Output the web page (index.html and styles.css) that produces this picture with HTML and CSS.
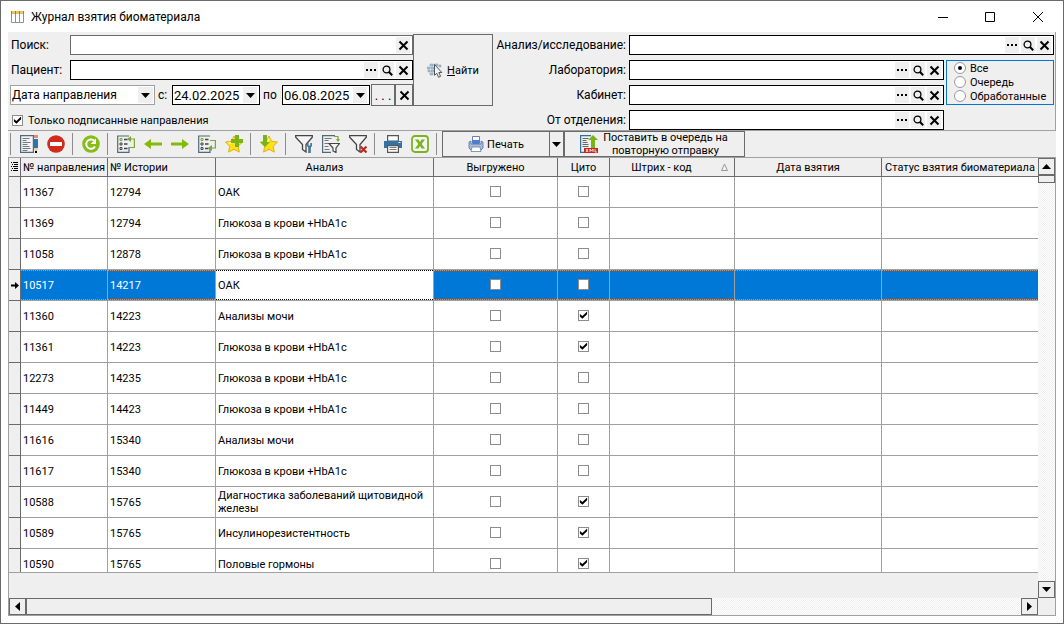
FILE: index.html
```
<!DOCTYPE html>
<html lang="ru">
<head>
  <meta charset="UTF-8" />
  <meta name="viewport" content="width=device-width, initial-scale=1.0" />
  <title>Журнал взятия биоматериала</title>
  <link rel="stylesheet" href="styles.css">
</head>
<body>

<!-- Общие иконки -->
<svg class="sprite" aria-hidden="true">
  <symbol id="i-x" viewBox="0 0 11 11"><path d="M1.5 1.5l8 8M9.5 1.5l-8 8" stroke="#000" stroke-width="2" fill="none"/></symbol>
  <symbol id="i-dots" viewBox="0 0 11 11"><path d="M0 4h2v2H0zM4 4h2v2H4zM8 4h2v2H8z" fill="#000"/></symbol>
  <symbol id="i-search" viewBox="0 0 11 11"><circle cx="4.5" cy="4.5" r="3.4" fill="none" stroke="#000" stroke-width="1.3"/><path d="M7 7l3.2 3.2" stroke="#000" stroke-width="2"/></symbol>
  <symbol id="i-down" viewBox="0 0 9 5"><path d="M0 0h9L4.5 5z" fill="#000"/></symbol>
  <symbol id="i-funnel" viewBox="0 0 18 18"><path d="M.7.7h16.6v1.6L11 9.5V17l-3.5-2.5v-5L.7 2.3z" fill="#f4f4f4" stroke="#444" stroke-width="1.3"/></symbol>
  <symbol id="i-list" viewBox="0 0 18 18"><path d="M12 1H.7v16.3H12V12" fill="none" stroke="#4d6a7c" stroke-width="1.2"/><path d="M3 3.500h2v2H3z" fill="none" stroke="#7aa63a"/><path d="M3 8h2v2H3zM3 12.500h2v2H3z" fill="none" stroke="#444"/><path d="M7 4.500h3.500M7 9h3.500M7 13.500h3.500" stroke="#444" stroke-width="1.300"/></symbol>
  <symbol id="i-star" viewBox="0 0 18 18"><path d="M9 1l2.500 5.300 6 .7-4.300 4.200 1.100 5.900L9 14.300l-5.400 2.800 1.100-5.900L.5 7l6-.7z" fill="#ffe119" stroke="#e0b010" stroke-width="1"/><path d="M9 3.500l-1.500 4-4 .5" stroke="#fff8a8" stroke-width="1.500" fill="none"/></symbol>
</svg>

<div class="window">
  <header class="titlebar">
    <svg class="app-icon" viewBox="0 0 13 12"><path d="M.5.5h12v11H.5z" fill="#fff" stroke="#7c96aa"/><path d="M4.500 0v12M8.500 0v12" stroke="#7c96aa"/><path d="M0 0h13v3H0z" fill="#5f88a8"/><path d="M1 0h3v3H1zM5 0h3v3H5zM9 0h3v3H9z" fill="#e8c460"/></svg>
    <h1>Журнал взятия биоматериала</h1>
    <div class="window-buttons">
      <button aria-label="Свернуть"><svg viewBox="0 0 10 10"><path d="M0 5.500h10" stroke="#000"/></svg></button>
      <button aria-label="Развернуть"><svg viewBox="0 0 10 10"><path d="M.5.5h9v9h-9z" fill="none" stroke="#000"/></svg></button>
      <button aria-label="Закрыть"><svg viewBox="0 0 10 10"><path d="M0 0l10 10M10 0L0 10" stroke="#000"/></svg></button>
    </div>
  </header>

  <form class="filters">
    <div class="filters-left">
      <div class="row">
        <label for="search">Поиск:</label>
        <div class="combo gray"><input id="search" type="text"><button type="button" aria-label="Очистить"><svg><use href="#i-x"/></svg></button></div>
      </div>
      <div class="row">
        <label for="patient">Пациент:</label>
        <div class="combo"><input id="patient" type="text"><button type="button" aria-label="Выбрать"><svg><use href="#i-dots"/></svg></button><button type="button" aria-label="Найти"><svg><use href="#i-search"/></svg></button><button type="button" aria-label="Очистить"><svg><use href="#i-x"/></svg></button></div>
      </div>
      <div class="row dates">
        <div class="date-kind">
          <select aria-label="Вид даты"><option>Дата направления</option></select>
          <svg class="caret"><use href="#i-down"/></svg>
        </div>
        <label for="from">с:</label>
        <div class="combo date"><input id="from" type="text" value="24.02.2025"><button type="button" aria-label="Календарь"><svg class="caret"><use href="#i-down"/></svg></button></div>
        <label for="to">по</label>
        <div class="combo date"><input id="to" type="text" value="06.08.2025"><button type="button" aria-label="Календарь"><svg class="caret"><use href="#i-down"/></svg></button></div>
        <button type="button" class="flat period">. . .</button>
        <button type="button" class="flat clear" aria-label="Очистить даты"><svg><use href="#i-x"/></svg></button>
      </div>
      <div class="row">
        <label class="signed"><input type="checkbox" checked> Только подписанные направления</label>
      </div>
    </div>

    <button type="button" class="flat find">
      <svg viewBox="0 0 16 16"><path d="M3 2h3v2H3zM7 2h4v2H7zM0 5h3v2H0zM4 5h3v2H4zM1 8h2v2H1zM4 8h3v2H4zM3 11h3v2H3zM12 3h2v2h-2z" fill="#a9c6d6" stroke="#6f98ae" stroke-width=".5"/><path d="M7.500 2.500v10.800l2.300-2 1.800 4 2-1-1.800-3.800h3z" fill="#f4f4f4" stroke="#555"/></svg>
      <span><u>Н</u>айти</span>
    </button>

    <div class="filters-right">
      <label for="analysis">Анализ/исследование:</label>
      <div class="combo wide"><input id="analysis" type="text"><button type="button" aria-label="Выбрать"><svg><use href="#i-dots"/></svg></button><button type="button" aria-label="Найти"><svg><use href="#i-search"/></svg></button><button type="button" aria-label="Очистить"><svg><use href="#i-x"/></svg></button></div>
      <label for="lab">Лаборатория:</label>
      <div class="combo"><input id="lab" type="text"><button type="button" aria-label="Выбрать"><svg><use href="#i-dots"/></svg></button><button type="button" aria-label="Найти"><svg><use href="#i-search"/></svg></button><button type="button" aria-label="Очистить"><svg><use href="#i-x"/></svg></button></div>
      <div class="status" role="radiogroup" aria-label="Статус">
        <label><input type="radio" name="status" checked> Все</label>
        <label><input type="radio" name="status"> Очередь</label>
        <label><input type="radio" name="status"> Обработанные</label>
      </div>
      <label for="room">Кабинет:</label>
      <div class="combo"><input id="room" type="text"><button type="button" aria-label="Выбрать"><svg><use href="#i-dots"/></svg></button><button type="button" aria-label="Найти"><svg><use href="#i-search"/></svg></button><button type="button" aria-label="Очистить"><svg><use href="#i-x"/></svg></button></div>
      <label for="dept">От отделения:</label>
      <div class="combo"><input id="dept" type="text"><button type="button" aria-label="Выбрать"><svg><use href="#i-dots"/></svg></button><button type="button" aria-label="Найти"><svg><use href="#i-search"/></svg></button><button type="button" aria-label="Очистить"><svg><use href="#i-x"/></svg></button></div>
    </div>
  </form>

  <div class="toolbar">
    <i class="sep"></i>
    <button class="tool" aria-label="Изменить"><svg viewBox="0 0 18 18"><path d="M.6.6h12.800v16.800H.6z" fill="#f4f4f4" stroke="#4d6a7c" stroke-width="1.200"/><path d="M2.500 3.500h7M2.500 5.500h4M2.500 7.500h8M2.500 9.500h5M2.500 11.500h7M2.500 13.500h8M2.500 15.500h5" stroke="#777"/><path d="M14 0h4v3h-4z" fill="#e58a7c"/><path d="M14 4h4v9h-4z" fill="#2f73a8"/><path d="M14 13h4l-1 3h-2z" fill="#e8cfa0"/><path d="M15 16h2v2h-2z" fill="#000"/></svg></button>
    <button class="tool" aria-label="Удалить"><svg viewBox="0 0 18 18"><circle cx="9" cy="9" r="8.800" fill="#cf2c1c"/><path d="M3 7h12v4H3z" fill="#fff"/></svg></button>
    <i class="sep"></i>
    <button class="tool" aria-label="Обновить"><svg viewBox="0 0 18 18"><circle cx="9" cy="9" r="8.800" fill="#86bc17"/><path d="M13 11.500A4.700 4.700 0 1 1 12 5.500" fill="none" stroke="#fff" stroke-width="2"/><path d="M14 3.500V9H8.700z" fill="#fff"/></svg></button>
    <i class="sep"></i>
    <button class="tool" aria-label="Первая запись"><svg viewBox="0 0 18 18"><use href="#i-list"/><path d="M12 12.500h5.400V4H13" fill="none" stroke="#7aa63a" stroke-width="1.200"/><path d="M10 4l4-3v6z" fill="#7aa63a"/></svg></button>
    <button class="tool" aria-label="Назад"><svg viewBox="0 0 18 18"><path d="M0 9l7-5v3.500h11v3H7V14z" fill="#84bb08"/></svg></button>
    <button class="tool" aria-label="Вперёд"><svg viewBox="0 0 18 18"><path d="M18 9l-7-5v3.500H0v3h11V14z" fill="#84bb08"/></svg></button>
    <button class="tool" aria-label="Последняя запись"><svg viewBox="0 0 18 18"><use href="#i-list"/><path d="M12 5.500h5.400V13H13" fill="none" stroke="#7aa63a" stroke-width="1.200"/><path d="M10 13l4-3v6z" fill="#7aa63a"/></svg></button>
    <button class="tool" aria-label="Добавить в избранное"><svg viewBox="0 0 18 18"><use href="#i-star"/><path d="M10 0h4v4h4v4h-4v4h-4V8H6V4h4z" fill="#7ab317"/></svg></button>
    <i class="sep"></i>
    <button class="tool" aria-label="Избранное"><svg viewBox="0 0 18 18"><use href="#i-star"/><path d="M3 0h4v7h3l-5 5-5-5h3z" fill="#7ab317"/></svg></button>
    <i class="sep"></i>
    <button class="tool" aria-label="Настроить фильтр"><svg viewBox="0 0 18 18"><use href="#i-funnel"/><path d="M12 8h1.500v2.500h1.800V8H17v3l-1.200 1.500V18h-2.600v-5.500L12 11z" fill="#41799f"/></svg></button>
    <button class="tool" aria-label="Фильтр по значению"><svg viewBox="0 0 18 18"><path d="M13 .6H.6v16.800H9" fill="none" stroke="#4d6a7c" stroke-width="1.200"/><path d="M2.500 3.500h7M2.500 5.500h4M2.500 8.500h4M2.500 11.500h4M2.500 14.500h5" stroke="#777"/><path d="M12 1.500h4V6" fill="none" stroke="#7aa63a" stroke-width="1.200"/><path d="M14 4h4l-2 3z" fill="#7aa63a"/><path d="M7 8.500h10.500L14 13v4.500L11 16v-3z" fill="#f4f4f4" stroke="#444" stroke-width="1.200"/></svg></button>
    <button class="tool" aria-label="Снять фильтр"><svg viewBox="0 0 18 18"><use href="#i-funnel"/><path d="M11.500 11.500l6 6M17.500 11.500l-6 6" stroke="#c0281e" stroke-width="2.200"/></svg></button>
    <i class="sep"></i>
    <button class="tool" aria-label="Распечатать"><svg viewBox="0 0 18 18"><path d="M3.600.6h10.800V6H3.600z" fill="#fff" stroke="#555" stroke-width="1.200"/><path d="M0 6h18v7H0z" fill="#2f73a8"/><path d="M14.500 7.500h2" stroke="#fff"/><path d="M3.600 10.600h10.800v6.800H3.600z" fill="#fff" stroke="#555" stroke-width="1.200"/><path d="M5.500 12.500h7M5.500 14.500h7" stroke="#777"/></svg></button>
    <button class="tool" aria-label="Экспорт в Excel"><svg viewBox="0 0 18 18"><rect x="1" y="1" width="16" height="16" rx="3" fill="#f4f7ee" stroke="#7db226" stroke-width="1.800"/><path d="M4 4.500h3.500L9 7l1.500-2.500H14L10.700 9l3.300 4.500h-3.500L9 11l-1.500 2.500H4L7.300 9z" fill="#7db226"/></svg></button>
    <i class="sep"></i>
    <button class="flat print"><svg viewBox="0 0 16 16"><path d="M4.500.5h7V7h-7z" fill="#fff" stroke="#6a7fae"/><path d="M1 6l2-1v3h10V5l2 1v6l-2 2H3l-2-2z" fill="#a9b9da" stroke="#5c70a0" stroke-width=".8"/><path d="M4.500 4h7v4h-7z" fill="#4a7fd0"/><path d="M4 11h8l1 4.500H3z" fill="#fff" stroke="#6a7fae" stroke-width=".8"/></svg>Печать</button>
    <button class="flat print-menu" aria-label="Варианты печати"><svg viewBox="0 0 9 5"><use href="#i-down"/></svg></button>
    <button class="flat resend"><svg viewBox="0 0 18 18"><path d="M11 .6H.6v16.800H5" fill="none" stroke="#2f6f9c" stroke-width="1.200"/><path d="M2.500 3.500h6M2.500 5.500h4M2.500 7.500h5M2.500 9.500h6M2.500 11.500h6" stroke="#666"/><path d="M13 0l5 5h-3v8h-4V5H8z" fill="#7ab317"/><path d="M4 13h14v5H4z" fill="#c0281e"/><path d="M6 14l2 3M8 14l-2 3M10 17v-3l1.500 2 1.500-2v3M15 14v3h2" fill="none" stroke="#fff" stroke-width=".8"/></svg><span>Поставить в очередь на повторную отправку</span></button>
  </div>

  <main class="grid">
    <div class="table-view">
      <table>
        <colgroup>
          <col class="c-mark"><col class="c-num"><col class="c-hist"><col class="c-name"><col class="c-sent"><col class="c-cito"><col class="c-code"><col class="c-date"><col>
        </colgroup>
        <thead>
          <tr>
            <th><svg class="menu" viewBox="0 0 8 10"><path d="M0 .5h1M2 .5h5M1 2.500h1M3 2.500h4M0 4.500h1M2 4.500h5M1 6.500h1M3 6.500h4M0 8.500h1M2 8.500h5" stroke="#000"/></svg></th>
            <th class="left">№ направления</th><th class="left">№ Истории</th><th>Анализ</th><th>Выгружено</th><th>Цито</th>
            <th><div class="sorted"><span>Штрих - код</span><svg viewBox="0 0 7 8"><path d="M3.500 1l3 6.500h-6z" fill="none" stroke="#999"/></svg></div></th>
            <th>Дата взятия</th><th>Статус взятия биоматериала</th>
          </tr>
        </thead>
        <tbody>
          <tr><td></td><td>11367</td><td>12794</td><td>ОАК</td><td><input type="checkbox" aria-label="Выгружено"></td><td><input type="checkbox" aria-label="Цито"></td><td></td><td></td><td></td></tr>
          <tr><td></td><td>11369</td><td>12794</td><td>Глюкоза в крови +HbA1c</td><td><input type="checkbox" aria-label="Выгружено"></td><td><input type="checkbox" aria-label="Цито"></td><td></td><td></td><td></td></tr>
          <tr><td></td><td>11058</td><td>12878</td><td>Глюкоза в крови +HbA1c</td><td><input type="checkbox" aria-label="Выгружено"></td><td><input type="checkbox" aria-label="Цито"></td><td></td><td></td><td></td></tr>
          <tr class="selected"><td><svg class="marker" viewBox="0 0 8 7"><path d="M0 2.500h4V0l4 3.500L4 7V4.500H0z"/></svg></td><td>10517</td><td>14217</td><td class="focus">ОАК</td><td><input type="checkbox" aria-label="Выгружено"></td><td><input type="checkbox" aria-label="Цито"></td><td></td><td></td><td></td></tr>
          <tr><td></td><td>11360</td><td>14223</td><td>Анализы мочи</td><td><input type="checkbox" aria-label="Выгружено"></td><td><input type="checkbox" aria-label="Цито" checked></td><td></td><td></td><td></td></tr>
          <tr><td></td><td>11361</td><td>14223</td><td>Глюкоза в крови +HbA1c</td><td><input type="checkbox" aria-label="Выгружено"></td><td><input type="checkbox" aria-label="Цито" checked></td><td></td><td></td><td></td></tr>
          <tr><td></td><td>12273</td><td>14235</td><td>Глюкоза в крови +HbA1c</td><td><input type="checkbox" aria-label="Выгружено"></td><td><input type="checkbox" aria-label="Цито"></td><td></td><td></td><td></td></tr>
          <tr><td></td><td>11449</td><td>14423</td><td>Глюкоза в крови +HbA1c</td><td><input type="checkbox" aria-label="Выгружено"></td><td><input type="checkbox" aria-label="Цито"></td><td></td><td></td><td></td></tr>
          <tr><td></td><td>11616</td><td>15340</td><td>Анализы мочи</td><td><input type="checkbox" aria-label="Выгружено"></td><td><input type="checkbox" aria-label="Цито"></td><td></td><td></td><td></td></tr>
          <tr><td></td><td>11617</td><td>15340</td><td>Глюкоза в крови +HbA1c</td><td><input type="checkbox" aria-label="Выгружено"></td><td><input type="checkbox" aria-label="Цито"></td><td></td><td></td><td></td></tr>
          <tr><td></td><td>10588</td><td>15765</td><td>Диагностика заболеваний щитовидной железы</td><td><input type="checkbox" aria-label="Выгружено"></td><td><input type="checkbox" aria-label="Цито" checked></td><td></td><td></td><td></td></tr>
          <tr><td></td><td>10589</td><td>15765</td><td>Инсулинорезистентность</td><td><input type="checkbox" aria-label="Выгружено"></td><td><input type="checkbox" aria-label="Цито" checked></td><td></td><td></td><td></td></tr>
          <tr><td></td><td>10590</td><td>15765</td><td>Половые гормоны</td><td><input type="checkbox" aria-label="Выгружено"></td><td><input type="checkbox" aria-label="Цито" checked></td><td></td><td></td><td></td></tr>
        </tbody>
      </table>
    </div>
    <div class="vscroll">
      <button class="flat" aria-label="Вверх"><svg viewBox="0 0 9 5"><path d="M0 5h9L4.500 0z"/></svg></button>
      <div class="thumb"></div>
      <button class="flat end" aria-label="Вниз"><svg viewBox="0 0 9 5"><path d="M0 0h9L4.500 5z"/></svg></button>
    </div>
    <div class="hscroll">
      <button class="flat" aria-label="Влево"><svg viewBox="0 0 5 9"><path d="M5 0v9L0 4.500z"/></svg></button>
      <div class="thumb"></div>
      <button class="flat end" aria-label="Вправо"><svg viewBox="0 0 5 9"><path d="M0 0v9l5-4.500z"/></svg></button>
    </div>
  </main>
</div>

</body>
</html>
```
FILE: styles.css
```
* {
  box-sizing: border-box;
}
body {
  margin: 0;
  font-family: Tahoma, Roboto, sans-serif;
  font-size: 11px;
  line-height: 13px;
  color: #000;
}
button, input, select {
  font: inherit;
  color: inherit;
  margin: 0;
  padding: 0;
  border: none;
  border-radius: 0;
  background: none;
}
svg {
  display: block;
  flex: none;
}
.sprite {
  display: none;
}
.window {
  display: flex;
  flex-direction: column;
  height: 100vh;
  padding: 0 7px 7px;
  border: 1px solid #6a6a6a;
  background: #fff;
}

/* Заголовок окна */
.titlebar {
  display: flex;
  align-items: center;
  height: 31px;
  margin-right: -4px;
  padding-left: 3px;
}
.app-icon {
  width: 13px;
  height: 12px;
}
.titlebar h1 {
  flex: 1;
  margin: 0 0 0 7px;
  font-size: 12px;
  font-weight: normal;
  line-height: 16px;
}
.window-buttons {
  display: flex;
}
.window-buttons button {
  display: flex;
  justify-content: center;
  width: 47px;
}
.window-buttons button:last-child {
  padding-left: 2px;
}
.window-buttons svg {
  width: 10px;
  height: 10px;
}

/* Панель фильтров */
.filters {
  display: flex;
  align-items: flex-start;
  height: 98px;
  padding: 2px 1px 0 2px;
  border-right: 1px solid #a0a0a0;
  background: #efefef;
  font-size: 12px;
}
.filters-left {
  display: grid;
  grid-template-rows: repeat(4, 20px);
  gap: 5px;
  width: 403px;
  padding: 1px 1px 0 0;
}
.row {
  display: flex;
  align-items: center;
}
.row > label {
  width: 60px;
  padding-left: 1px;
}
.combo {
  display: flex;
  align-items: center;
  flex: 1;
  gap: 2px;
  height: 20px;
  padding: 0 2px 0 1px;
  border: 1px solid #000;
  background: #fff;
}
.combo.gray {
  border-color: #6a6a6a;
}
.combo input {
  flex: 1;
  min-width: 0;
  height: 18px;
  font-size: 13px;
  outline: none;
}
.combo button {
  display: flex;
  align-items: center;
  justify-content: center;
  width: 14px;
  height: 16px;
  background: #efefef;
}
.combo svg, .clear svg {
  width: 11px;
  height: 11px;
}
.combo .caret, .caret, .print-menu svg {
  width: 9px;
  height: 5px;
}
.dates .date {
  flex: none;
  width: 88px;
}
.date-kind {
  position: relative;
  width: 145px;
  height: 20px;
}
.date-kind select {
  width: 100%;
  height: 20px;
  padding-left: 1px;
  border: 1px solid #a0a0a0;
  background: linear-gradient(#efefef, #efefef) right 1px center / 15px 16px no-repeat #fff;
  appearance: none;
}
.date-kind .caret {
  position: absolute;
  top: 8px;
  right: 5px;
}
.row.dates > label {
  width: 17px;
  padding-left: 3px;
}
.row.dates > .date + label {
  width: 22px;
}
.flat {
  display: flex;
  align-items: center;
  justify-content: center;
  border: 1px solid #6a6a6a;
  background: #efefef;
}
.period {
  width: 24px;
  height: 22px;
  margin-left: 1px;
  font-size: 13px;
}
.clear {
  width: 18px;
  height: 22px;
}
.row > .signed {
  display: flex;
  align-items: center;
  gap: 5px;
  width: auto;
  padding-left: 2px;
  font-size: 11px;
}
input[type="checkbox"] {
  flex: none;
  width: 11px;
  height: 11px;
  border: 1px solid #8c8c8c;
  background: #fff;
  appearance: none;
}
input[type="checkbox"]:checked::before {
  content: "";
  display: block;
  width: 9px;
  height: 9px;
  background: #000;
  clip-path: polygon(10% 38%, 38% 62%, 90% 10%, 90% 42%, 38% 92%, 10% 68%);
}
.find {
  gap: 4px;
  width: 80px;
  height: 72px;
  font-size: 11px;
}
.find svg, .print svg {
  width: 16px;
  height: 16px;
}
.filters-right {
  display: grid;
  grid-template-columns: 134px 1fr 108px;
  grid-template-rows: repeat(4, 20px);
  gap: 5px 2px;
  flex: 1;
  align-items: center;
  padding-top: 1px;
}
.filters-right > label {
  grid-column: 1;
  padding-right: 1px;
  text-align: right;
  white-space: nowrap;
}
.filters-right .wide {
  grid-column: 2 / 4;
}
.status {
  grid-column: 3;
  grid-row: 2 / 4;
  display: flex;
  flex-direction: column;
  height: 45px;
  padding-left: 7px;
  border: 1px solid #0078d7;
  font-size: 11px;
}
.status label {
  display: flex;
  align-items: center;
  gap: 4px;
  height: 14px;
}
.status input {
  display: flex;
  align-items: center;
  justify-content: center;
  width: 12px;
  height: 12px;
  border: 1px solid #999;
  border-radius: 50%;
  background: #fff;
  appearance: none;
}
.status input:checked::before {
  content: "";
  width: 4px;
  height: 4px;
  border-radius: 50%;
  background: #000;
}

/* Панель инструментов */
.toolbar {
  display: flex;
  align-items: center;
  height: 27px;
  border-top: 1px solid #a0a0a0;
  background: #efefef;
}
.sep {
  width: 1px;
  height: 22px;
  margin: 0 5px 0 2px;
  background: #8c8c8c;
}
.tool {
  width: 27px;
  padding: 0 5px 0 4px;
}
.tool svg, .resend svg {
  width: 18px;
  height: 18px;
}
.toolbar .flat {
  height: 26px;
}
.print {
  gap: 3px;
  width: 108px;
}
.print-menu {
  width: 15px;
  margin-left: -1px;
}
.resend {
  gap: 4px;
  width: 181px;
  line-height: 13px;
  overflow: hidden;
}
.resend span {
  width: 128px;
}

/* Таблица */
.grid {
  flex: 1;
  min-height: 0;
  display: grid;
  grid-template-columns: 1fr 17px;
  grid-template-rows: 1fr 17px;
  border: 1px solid #a0a0a0;
  background: #efefef;
}
.table-view {
  min-height: 0;
  overflow: hidden;
  margin-bottom: 25px;
  border-bottom: 1px solid #a0a0a0;
}
table {
  width: 100%;
  table-layout: fixed;
  border-collapse: separate;
  border-spacing: 0;
}
.c-mark { width: 12px; }
.c-num { width: 87px; }
.c-hist { width: 108px; }
.c-name { width: 218px; }
.c-sent { width: 124px; }
.c-cito { width: 52px; }
.c-code { width: 125px; }
.c-date { width: 147px; }
th {
  height: 19px;
  padding: 0;
  border-right: 1px solid #6a6a6a;
  border-bottom: 1px solid #6a6a6a;
  background: #efefef;
  font-weight: normal;
  white-space: nowrap;
}
th.left {
  padding-left: 2px;
  text-align: left;
}
td {
  height: 31px;
  padding: 0 2px;
  border-right: 1px solid #a0a0a0;
  border-bottom: 1px solid #a0a0a0;
  background: #fff;
}
th:last-child, td:last-child {
  border-right: none;
}
td:first-child {
  padding: 0;
  border-color: #6a6a6a;
  background: #efefef;
}
td:nth-child(5), td:nth-child(6) {
  padding-bottom: 2px;
}
td input[type="checkbox"] {
  display: block;
  margin: 0 auto;
}
.menu {
  width: 8px;
  height: 10px;
  margin-left: 2px;
}
.marker {
  width: 8px;
  height: 7px;
  margin-left: 2px;
}
.sorted {
  display: flex;
  align-items: center;
}
.sorted span {
  flex: 1;
  padding-right: 8px;
}
.sorted svg {
  width: 7px;
  height: 8px;
  margin-right: 6px;
}
.selected td:not(:first-child) {
  background:
    repeating-linear-gradient(90deg, #ff8728 0 1px, #0078d7 1px 2px) top / 100% 1px no-repeat,
    repeating-linear-gradient(90deg, #ff8728 0 1px, #0078d7 1px 2px) bottom / 100% 1px no-repeat,
    #0078d7;
  color: #fff;
}
.selected td.focus:not(:first-child) {
  background:
    repeating-linear-gradient(90deg, #000 0 1px, #fff 1px 2px) top / 100% 1px no-repeat,
    repeating-linear-gradient(90deg, #000 0 1px, #fff 1px 2px) bottom / 100% 1px no-repeat,
    #fff;
  color: #000;
}

/* Полосы прокрутки */
.vscroll, .hscroll {
  display: flex;
  background: repeating-conic-gradient(#fff 0 25%, #efefef 0 50%) 0 0 / 2px 2px;
}
.vscroll {
  flex-direction: column;
}
.vscroll .flat, .hscroll .flat {
  flex: none;
  width: 17px;
  height: 17px;
}
.vscroll svg {
  width: 9px;
  height: 5px;
}
.hscroll svg {
  width: 5px;
  height: 9px;
}
.thumb {
  border: 1px solid #6a6a6a;
  background: #efefef;
}
.vscroll .thumb {
  height: 8px;
}
.hscroll .thumb {
  width: calc(100% * 2 / 3);
}
.vscroll .end {
  margin-top: auto;
}
.hscroll .end {
  margin-left: auto;
}
```
